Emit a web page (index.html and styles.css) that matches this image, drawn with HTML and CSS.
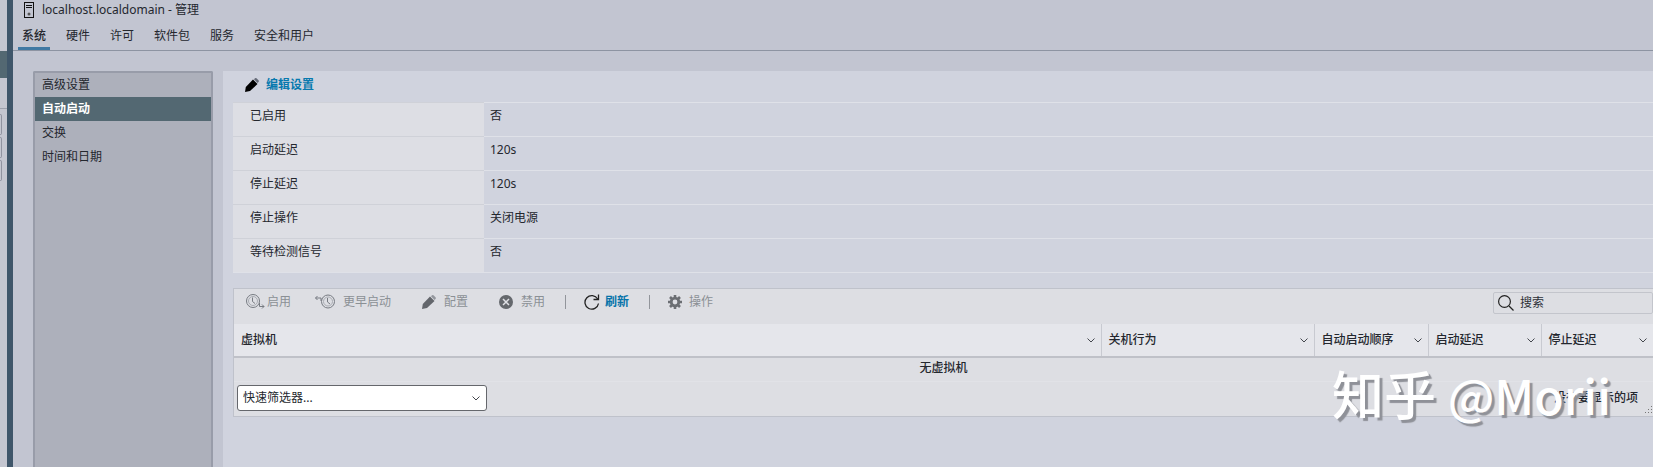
FILE: index.html
```
<!DOCTYPE html>
<html lang="zh-CN">
<head>
    <meta charset="UTF-8">
    <meta name="viewport" content="width=device-width, initial-scale=1.0">
    <title>localhost.localdomain - 管理</title>
    <link rel="stylesheet" href="styles.css">
</head>
<body>
    <div class="app">
        <div class="navigator">
            <div class="nav-selected"></div>
            <div class="nav-line"></div>
            <div class="nav-box"></div>
            <div class="nav-box"></div>
            <div class="nav-box"></div>
        </div>
        <div class="splitter"></div>

        <div class="content">
            <header class="title">
                <svg width="10" height="16" viewBox="0 0 10 16" fill="none" stroke="#111">
                    <rect x="0.5" y="0.5" width="9" height="15"/>
                    <path d="M2 3.500h6M2 5.500h6"/>
                    <circle cx="5" cy="12" r="1.500" fill="#555" stroke="none"/>
                </svg>
                <span>localhost.localdomain - 管理</span>
            </header>

            <nav class="tabs">
                <a href="#" class="tab active">系统</a>
                <a href="#" class="tab">硬件</a>
                <a href="#" class="tab">许可</a>
                <a href="#" class="tab">软件包</a>
                <a href="#" class="tab">服务</a>
                <a href="#" class="tab">安全和用户</a>
            </nav>

            <div class="body">
                <nav class="sidebar">
                    <a href="#">高级设置</a>
                    <a href="#" class="selected">自动启动</a>
                    <a href="#">交换</a>
                    <a href="#">时间和日期</a>
                </nav>

                <main class="panel">
                    <button class="edit-button">
                        <svg width="14" height="14" viewBox="0 0 14 14">
                            <path fill="#000" d="M0 14l.8-5 7.200-7.500 4.500 4.500-7.500 7z"/>
                            <path fill="#666b78" d="M9 1.300l1-1q.8-.6 1.500 0l2 2q.8.800 0 1.600l-1 1.200z"/>
                        </svg>
                        编辑设置
                    </button>

                    <table class="properties">
                        <tr><th scope="row">已启用</th><td>否</td></tr>
                        <tr><th scope="row">启动延迟</th><td>120s</td></tr>
                        <tr><th scope="row">停止延迟</th><td>120s</td></tr>
                        <tr><th scope="row">停止操作</th><td>关闭电源</td></tr>
                        <tr><th scope="row">等待检测信号</th><td>否</td></tr>
                    </table>

                    <section class="grid">
                        <div class="toolbar">
                            <button class="tool tight" disabled>
                                <svg width="19" height="16" viewBox="0 0 19 16" fill="none" stroke="#777b82">
                                    <circle cx="7" cy="7" r="6.500"/>
                                    <circle cx="7" cy="7" r="4.500" stroke="#a9acb3"/>
                                    <path d="M6.500 3.500v4l2.500 2"/>
                                    <path d="M13.500 9v3.500h4.500M16 10.500l2 2-2 2"/>
                                </svg>
                                启用
                            </button>
                            <button class="tool" disabled>
                                <svg width="20" height="16" viewBox="0 0 20 16" fill="none" stroke="#777b82">
                                    <circle cx="13" cy="7.500" r="6.500"/>
                                    <circle cx="13" cy="7.500" r="4.500" stroke="#a9acb3"/>
                                    <path d="M12.500 4v4l2.500 2"/>
                                    <path d="M6 7v-3h-5.500M2.500 2l-2 2 2 2"/>
                                </svg>
                                更早启动
                            </button>
                            <button class="tool" disabled>
                                <svg width="14" height="14" viewBox="0 0 14 14">
                                    <path fill="#63666c" d="M0 14l.8-5 7.200-7.500 4.500 4.500-7.500 7z"/>
                                    <path fill="#94979e" d="M9 1.300l1-1q.8-.6 1.500 0l2 2q.8.800 0 1.600l-1 1.200z"/>
                                </svg>
                                配置
                            </button>
                            <button class="tool last" disabled>
                                <svg width="14" height="14" viewBox="0 0 14 14">
                                    <circle cx="7" cy="7" r="7" fill="#65686d"/>
                                    <path d="M4 4l6 6M10 4l-6 6" stroke="#e0e1e6" stroke-width="1.500"/>
                                </svg>
                                禁用
                            </button>
                            <span class="separator"></span>
                            <button class="tool refresh">
                                <svg width="16" height="16" viewBox="0 0 16 16" fill="none" stroke="#222" stroke-width="1.300">
                                    <path d="M13.700 5A6.800 6.800 0 1 0 14.500 9.500"/>
                                    <path d="M14.500 0.500v5h-5"/>
                                </svg>
                                刷新
                            </button>
                            <span class="separator"></span>
                            <button class="tool actions" disabled>
                                <svg width="14" height="14" viewBox="0 0 14 14">
                                    <circle cx="7" cy="7" r="3.800" fill="none" stroke="#6b6e73" stroke-width="2.800"/>
                                    <path d="M7 0v2.500M7 11.500v2.500M0 7h2.500M11.500 7h2.500M2 2l2 2M10 10l2 2M12 2l-2 2M4 10l-2 2" stroke="#6b6e73" stroke-width="2.600"/>
                                </svg>
                                操作
                            </button>
                            <label class="search">
                                <svg width="16" height="16" viewBox="0 0 16 16" fill="none" stroke="#222" stroke-width="1.200">
                                    <circle cx="6.500" cy="6.500" r="5.900"/>
                                    <path d="M11 11l4.500 4.500"/>
                                </svg>
                                <input type="text" placeholder="搜索" aria-label="搜索">
                            </label>
                        </div>

                        <table class="vms">
                            <colgroup>
                                <col>
                                <col class="col-behavior">
                                <col class="col-order">
                                <col class="col-start">
                                <col class="col-stop">
                            </colgroup>
                            <thead>
                                <tr>
                                    <th><div>虚拟机<svg width="8" height="5" viewBox="0 0 8 5"><path d="M.5.5l3.500 3.500 3.500-3.500"/></svg></div></th>
                                    <th><div>关机行为<svg width="8" height="5" viewBox="0 0 8 5"><path d="M.5.5l3.500 3.500 3.500-3.500"/></svg></div></th>
                                    <th><div>自动启动顺序<svg width="8" height="5" viewBox="0 0 8 5"><path d="M.5.5l3.500 3.500 3.500-3.500"/></svg></div></th>
                                    <th><div>启动延迟<svg width="8" height="5" viewBox="0 0 8 5"><path d="M.5.5l3.500 3.500 3.500-3.500"/></svg></div></th>
                                    <th><div>停止延迟<svg width="8" height="5" viewBox="0 0 8 5"><path d="M.5.5l3.500 3.500 3.500-3.500"/></svg></div></th>
                                </tr>
                            </thead>
                            <tbody>
                                <tr><td colspan="5">无虚拟机</td></tr>
                            </tbody>
                        </table>

                        <div class="grid-footer">
                            <div class="filter">
                                <select aria-label="快速筛选器">
                                    <option>快速筛选器...</option>
                                </select>
                                <svg width="8" height="5" viewBox="0 0 8 5"><path d="M.5.5l3.500 3.500 3.500-3.500"/></svg>
                            </div>
                            <span>没有要显示的项</span>
                            <svg class="grip" width="8" height="8" viewBox="0 0 8 8" fill="#777">
                                <path d="M6 0h1v1h-1zM3 3h1v1h-1zM6 3h1v1h-1zM0 6h1v1h-1zM3 6h1v1h-1zM6 6h1v1h-1z"/>
                            </svg>
                            <div class="watermark">知乎 <span>@Morii</span></div>
                        </div>
                    </section>
                </main>
            </div>
        </div>
    </div>
</body>
</html>
```
FILE: styles.css
```
* {
    box-sizing: border-box;
}

body {
    margin: 0;
    font-family: "Noto Sans", "Noto Sans CJK SC", sans-serif;
    font-size: 12px;
    line-height: 18px;
    color: #24272e;
    background-color: #c2c5d1;
}

a {
    color: inherit;
    text-decoration: none;
}

button {
    display: flex;
    align-items: center;
    padding: 0;
    border: none;
    background: none;
    font: inherit;
}

.app {
    display: flex;
    min-height: 100vh;
}

/* edge of the navigator left of the splitter */
.navigator {
    width: 7px;
    padding-top: 51px;
    background-color: #c4c6d0;
}

.nav-selected {
    height: 27px;
    background-color: #536872;
}

.nav-line {
    height: 31px;
    margin-bottom: 5px;
    border-bottom: 1px solid #9da1ad;
}

.nav-box {
    width: 2px;
    height: 21px;
    margin-bottom: 2px;
    border: 1px solid #9093a0;
    border-left: none;
    border-radius: 0 3px 3px 0;
}

.splitter {
    width: 6px;
    background-color: #3f566a;
}

.content {
    flex: 1;
    min-width: 0;
    display: flex;
    flex-direction: column;
}

.title {
    display: flex;
    align-items: center;
    gap: 8px;
    height: 20px;
    padding-left: 11px;
}

.tabs {
    display: flex;
    gap: 12px;
    height: 31px;
    padding-left: 5px;
    border-bottom: 1px solid #8d94a2;
}

.tab {
    padding: 7px 4px 0;
}

.tab.active {
    border-bottom: 3px solid #4079a3;
    font-weight: 500;
}

.body {
    flex: 1;
    display: flex;
    gap: 10px;
    padding: 20px 0 0 20px;
}

.sidebar {
    width: 180px;
    border: 2px solid #989ca9;
    border-bottom: none;
    border-radius: 2px 2px 0 0;
    background-color: #adb0bb;
}

.sidebar a {
    display: block;
    padding: 3px 7px;
}

.sidebar .selected {
    background-color: #536872;
    color: #fff;
    font-weight: bold;
}

.panel {
    flex: 1;
    min-width: 0;
    padding: 5px 0 0 10px;
    background-color: #d0d3de;
}

.edit-button {
    gap: 7px;
    margin-left: 12px;
    color: #0779ae;
    font-weight: bold;
}

.properties {
    width: 100%;
    margin: 8px 0 15px;
    border-collapse: collapse;
    border-bottom: 1px solid #dfe1e8;
}

.properties th,
.properties td {
    height: 34px;
    padding: 4px 6px 11px;
    border-top: 1px solid #dfe1e8;
    text-align: left;
    font-weight: normal;
    vertical-align: top;
}

.properties th {
    width: 251px;
    padding-left: 17px;
    border-top-color: #cfd1d8;
    background-color: #dddee4;
}

.grid {
    border: 1px solid #bfc2cb;
    border-right: none;
    background-color: #dddee3;
}

.toolbar {
    display: flex;
    align-items: flex-start;
    height: 35px;
    padding: 4px 0 0 12px;
}

.tool {
    gap: 8px;
    margin-right: 31px;
    color: #8b9095;
}

.tool.tight {
    gap: 2px;
    margin-right: 24px;
}

.tool.last {
    margin-right: 20px;
}

.tool.refresh {
    gap: 5px;
    margin: 0 20px 0 18px;
    color: #0774aa;
    font-weight: bold;
}

.tool.actions {
    gap: 7px;
    margin-left: 18px;
}

.separator {
    width: 1px;
    height: 14px;
    margin-top: 2px;
    background-color: #92959b;
}

.search {
    display: flex;
    align-items: center;
    gap: 6px;
    width: 160px;
    height: 22px;
    margin: -1px 0 0 auto;
    padding-left: 4px;
    border: 1px solid #c3c5cc;
    border-radius: 2px;
}

.search input {
    flex: 1;
    min-width: 0;
    padding: 0;
    border: none;
    background: none;
    font: inherit;
}

.search input::placeholder {
    color: #2e3138;
}

.vms {
    width: 100%;
    table-layout: fixed;
    border-collapse: collapse;
}

.col-behavior {
    width: 213px;
}

.col-order {
    width: 114px;
}

.col-start {
    width: 113px;
}

.col-stop {
    width: 112px;
}

.vms th {
    height: 33px;
    padding: 0 6px 0 7px;
    border-bottom: 2px solid #bfc1c8;
    background-color: #e5e6eb;
    font-weight: 500;
}

.vms th + th {
    border-left: 1px solid #c8cad1;
}

.vms th div {
    display: flex;
    align-items: center;
    justify-content: space-between;
}

.vms td {
    height: 24px;
    padding: 0 0 2px;
    border-bottom: 1px solid #e1e2e7;
    text-align: center;
    font-weight: 500;
}

.vms svg,
.filter svg {
    fill: none;
    stroke: #44474d;
}

.grid-footer {
    position: relative;
    display: flex;
    align-items: center;
    justify-content: space-between;
    height: 34px;
    padding: 0 15px 2px 3px;
    font-weight: 500;
}

.filter {
    position: relative;
    width: 250px;
}

.filter select {
    display: block;
    width: 100%;
    height: 26px;
    padding: 0 5px;
    appearance: none;
    border: 1px solid #65676c;
    border-radius: 3px;
    background-color: #fff;
    color: #24272e;
    font: inherit;
    font-weight: normal;
}

.filter svg {
    position: absolute;
    top: 11px;
    right: 7px;
}

.grip {
    position: absolute;
    right: 0;
    bottom: 2px;
}

.watermark {
    position: absolute;
    right: 42px;
    bottom: -10px;
    color: #fff;
    font-family: "Noto Sans CJK SC", sans-serif;
    font-size: 52px;
    font-weight: 500;
    line-height: 64px;
    text-shadow: 3px 3px 1px #8f9198;
    pointer-events: none;
}

.watermark span {
    font-size: 48px;
}
```
